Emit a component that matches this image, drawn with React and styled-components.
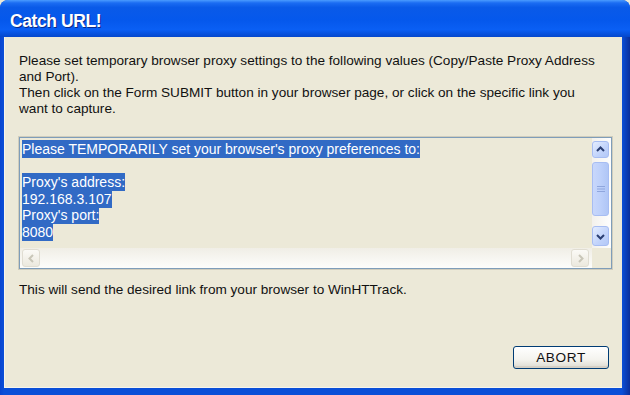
import React from "react";
import styled, { createGlobalStyle } from "styled-components";

const Global = createGlobalStyle`
  html, body { margin: 0; padding: 0; background: #ece9d8; }
  body { font-family: "Liberation Sans", Arial, sans-serif; }
`;

const Window = styled.div`
  width: 630px;
  height: 395px;
  display: flex;
  flex-direction: column;
  overflow: hidden;
  border-radius: 8px 8px 0 0;
  background: #0a4fd8;
`;

const TitleBar = styled.div`
  height: 37px;
  flex: none;
  display: flex;
  align-items: center;
  padding: 6px 0 0 10px;
  box-sizing: border-box;
  background: linear-gradient(
    to bottom,
    #4a9bff 0%,
    #1b6cf2 8%,
    #0a5ae8 20%,
    #0558ec 55%,
    #0a5ff4 80%,
    #0447cc 100%
  );
  color: #fff;
  font: bold 17.5px "Liberation Sans", Arial, sans-serif;
  text-shadow: 1px 1px 0 #0a2a8a;
  letter-spacing: -0.4px;
`;

const Frame = styled.div`
  flex: 1;
  display: flex;
  padding: 0 8px 7px 4px;
  background: linear-gradient(to right, #0845d0 0, #0a4fd8 4px, #0a4fd8 622px, #0a2f9a 630px);
`;

const Body = styled.div`
  flex: 1;
  background: #ece9d8;
  border-left: 1px solid #f6f4ec;
  border-bottom: 1px solid #f6f4ec;
  display: flex;
  flex-direction: column;
  padding: 16px 10px 18px 14px;
  color: #111;
  font-size: 13.6px;
  line-height: 16px;
`;

const Message = styled.p`
  margin: 0;
  white-space: nowrap;
`;

const TextBox = styled.div`
  margin: 20px 0 0 0;
  height: 132px;
  border: 1px solid #7f9db9;
  box-sizing: border-box;
  display: grid;
  grid-template-columns: 1fr 19px;
  grid-template-rows: 1fr 20px;
  background: #ece9d8;
  outline: 1px solid #d0cdbd;
`;

const TextArea = styled.div`
  padding: 3px 2px 0 2px;
  font-size: 14px;
  line-height: 16.5px;
  overflow: hidden;
`;

const Line = styled.div`
  height: 16.5px;
  white-space: nowrap;
`;

const Selected = styled.span`
  background: #316ac5;
  color: #fff;
  padding: 1px 0;
`;

const VScroll = styled.div`
  display: flex;
  flex-direction: column;
  gap: 2px;
  padding: 3px 2px 2px 0;
  background: linear-gradient(to right, #f3f1ec, #fefefe);
`;

const ScrollBtn = styled.div`
  height: ${(p) => p.h || 17}px;
  flex: none;
  border: 1px solid ${(p) => (p.disabled ? "#e0ddd2" : "#a7bdf2")};
  border-radius: 3px;
  box-sizing: border-box;
  background: ${(p) =>
    p.disabled
      ? "linear-gradient(to bottom, #fbfaf6, #ece9de)"
      : "linear-gradient(to bottom right, #e4edff, #c1d3fb 60%, #b3c8f7)"};
  display: flex;
  align-items: center;
  justify-content: center;
`;

const Thumb = styled.div`
  flex: 1;
  margin: 2px 0 8px;
  border: 1px solid #a7bdf2;
  border-radius: 3px;
  background: linear-gradient(to right, #c8d7fb, #bdd0fa 50%, #b0c6f6);
  display: flex;
  align-items: center;
  justify-content: center;
`;

const HScroll = styled.div`
  display: flex;
  align-items: center;
  justify-content: space-between;
  padding: 1px 3px 1px 2px;
  background: linear-gradient(to bottom, #f0eee6, #fdfdfb);
`;

const HBtn = styled(ScrollBtn)`
  width: 18px;
  height: 18px;
`;

const Corner = styled.div`
  background: #ece9d8;
`;

const Note = styled.p`
  margin: 13px 0 0;
`;

const Footer = styled.div`
  margin-top: auto;
  display: flex;
  justify-content: flex-end;
  padding-right: 3px;
`;

const Button = styled.button`
  width: 96px;
  height: 23px;
  border: 1px solid #003c74;
  border-radius: 3px;
  background: linear-gradient(to bottom, #ffffff 0%, #f4f3ee 60%, #dcdad0 100%);
  box-shadow: inset 0 -2px 0 #d6d0c5, inset 0 1px 0 #fff;
  font: 13.6px "Liberation Sans", Arial, sans-serif;
  color: #111;
  letter-spacing: 0.6px;
  padding: 0;
`;

const Chevron = ({ dir, color = "#2b3f73" }) => {
  const paths = {
    up: "M1 6 L4.5 2.5 L8 6",
    down: "M1 3 L4.5 6.5 L8 3",
    left: "M6 1 L2.5 4.5 L6 8",
    right: "M3 1 L6.5 4.5 L3 8",
  };
  return (
    <svg width="9" height="9" viewBox="0 0 9 9">
      <path d={paths[dir]} fill="none" stroke={color} strokeWidth="2" />
    </svg>
  );
};

const Grip = () => (
  <svg width="8" height="8" viewBox="0 0 8 8">
    <path d="M0 1.5 H8 M0 4 H8 M0 6.5 H8" stroke="#8fa6dd" strokeWidth="1" />
  </svg>
);

export default function App() {
  return (
    <>
      <Global />
      <Window>
        <TitleBar>Catch URL!</TitleBar>
        <Frame>
          <Body>
            <Message>
              Please set temporary browser proxy settings to the following values (Copy/Paste Proxy Address
              <br />
              and Port).
            </Message>
            <Message>
              Then click on the Form SUBMIT button in your browser page, or click on the specific link you
              <br />
              want to capture.
            </Message>
            <TextBox>
              <TextArea>
                <Line>
                  <Selected>Please TEMPORARILY set your browser's proxy preferences to:</Selected>
                </Line>
                <Line />
                <Line>
                  <Selected>Proxy's address:</Selected>
                </Line>
                <Line>
                  <Selected>192.168.3.107</Selected>
                </Line>
                <Line>
                  <Selected>Proxy's port:</Selected>
                </Line>
                <Line>
                  <Selected>8080</Selected>
                </Line>
              </TextArea>
              <VScroll>
                <ScrollBtn>
                  <Chevron dir="up" />
                </ScrollBtn>
                <Thumb>
                  <Grip />
                </Thumb>
                <ScrollBtn h={20}>
                  <Chevron dir="down" />
                </ScrollBtn>
              </VScroll>
              <HScroll>
                <HBtn disabled>
                  <Chevron dir="left" color="#c9c6b8" />
                </HBtn>
                <HBtn disabled>
                  <Chevron dir="right" color="#c9c6b8" />
                </HBtn>
              </HScroll>
              <Corner />
            </TextBox>
            <Note>This will send the desired link from your browser to WinHTTrack.</Note>
            <Footer>
              <Button>ABORT</Button>
            </Footer>
          </Body>
        </Frame>
      </Window>
    </>
  );
}
